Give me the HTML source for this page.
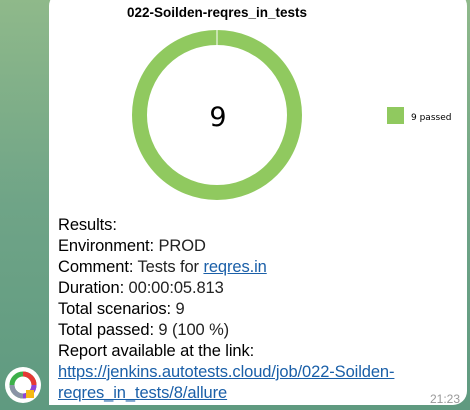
<!DOCTYPE html>
<html><head><style>
body{margin:0;width:470px;height:410px;overflow:hidden;background:linear-gradient(180deg,#8fb98a 0%,#6fa487 50%,#5f9a80 100%);font-family:"Liberation Sans",sans-serif;position:relative}
.b{position:absolute;left:49px;top:-8px;width:418px;height:413px;background:#fff;border-radius:14px 14px 14px 0}
.t{position:absolute;left:58px;top:215px;font-size:16.5px;line-height:21px;color:#000;letter-spacing:-0.1px}
.t .v{color:#222}
a{color:#1a5fa8;text-decoration:underline}
.time{position:absolute;right:10px;bottom:4px;font-size:12px;color:#999}
</style></head><body>
<div class="b"></div>
<svg style="position:absolute;left:0;top:0" width="470" height="210">
<text x="217" y="17" text-anchor="middle" font-family="Liberation Sans" font-weight="bold" font-size="13.5">022-Soilden-reqres_in_tests</text>
<circle cx="217" cy="115" r="77.5" fill="none" stroke="#90c95f" stroke-width="15"/>
<line x1="217" y1="29" x2="217" y2="46" stroke="#fff" stroke-width="1"/>
<text x="218" y="126" text-anchor="middle" font-family="DejaVu Sans" font-size="27">9</text>
<rect x="387" y="107" width="17" height="17" fill="#90c95f"/>
<text x="411" y="120" font-family="DejaVu Sans" font-size="9">9 passed</text>
</svg>
<div class="t">
<div>Results:</div>
<div>Environment: <span class="v">PROD</span></div>
<div>Comment: <span class="v">Tests for <a>reqres.in</a></span></div>
<div>Duration: <span class="v">00:00:05.813</span></div>
<div>Total scenarios: <span class="v">9</span></div>
<div>Total passed: <span class="v">9 (100 %)</span></div>
<div>Report available at the link:</div>
<div><a>https://jenkins.autotests.cloud/job/022-Soilden-<br>reqres_in_tests/8/allure</a></div>
</div>
<div class="time">21:23</div>
<svg style="position:absolute;left:4px;top:366px" width="38" height="38">
<circle cx="19" cy="19" r="18" fill="#fff"/>
<circle cx="19" cy="19" r="11" fill="none" stroke="#3db04a" stroke-width="5"/>
<path d="M19 8 A11 11 0 0 1 30 19" fill="none" stroke="#e53935" stroke-width="5"/>
<path d="M30 19 A11 11 0 0 1 19 30" fill="none" stroke="#8e44d8" stroke-width="5"/>
<path d="M19 30 A11 11 0 0 1 8 19" fill="none" stroke="#8a94a6" stroke-width="5"/>
<rect x="22" y="24" width="8" height="8" fill="#f5b915"/>
</svg>
</body></html>
